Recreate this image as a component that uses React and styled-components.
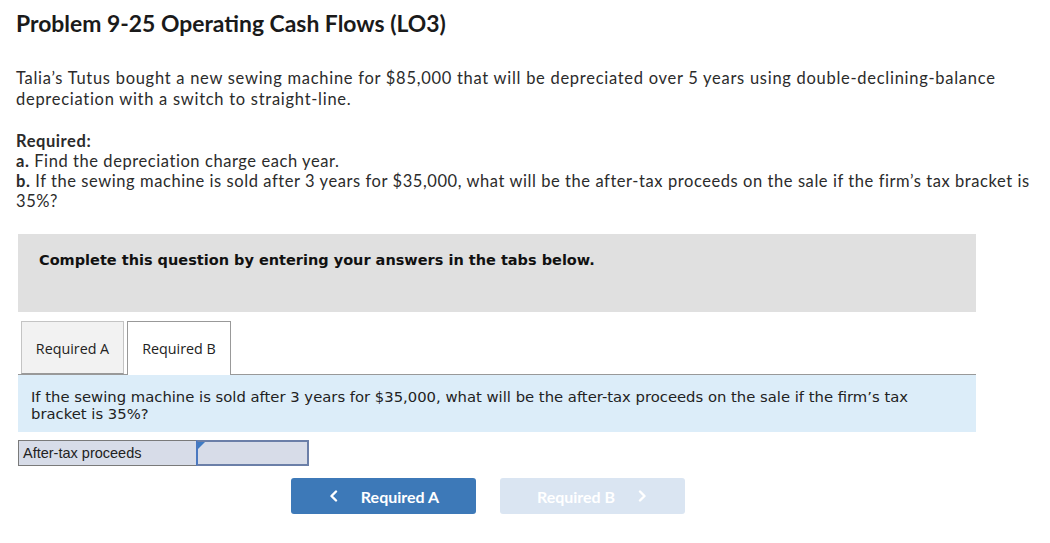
import React from "react";
import styled, { createGlobalStyle } from "styled-components";

const GlobalStyle = createGlobalStyle`
  body {
    margin: 0;
    background: #fff;
    font-family: "Lato", "Open Sans", sans-serif;
    color: #222;
  }
`;

const Page = styled.div`
  padding: 10px 16px 0 16px;
  width: 1018px;
`;

const Title = styled.h1`
  font-family: "Lato", sans-serif;
  font-size: 22.9px;
  font-weight: 700;
  margin: 0 0 32px 0;
  line-height: 26px;
  color: #1a1a1a;
`;

const Para = styled.p`
  font-size: 16.5px;
  letter-spacing: 0.72px;
  line-height: 21px;
  margin: 0 0 21px 0;
  color: #2b2b2b;
`;

const Required = styled.div`
  font-size: 16.5px;
  letter-spacing: 0.57px;
  line-height: 20px;
  color: #2b2b2b;
  b {
    font-weight: 700;
  }
`;

const Card = styled.div`
  margin: 23px 0 0 2px;
  width: 958px;
`;

const Notice = styled.div`
  background: #e0e0e0;
  height: 78px;
  padding: 18px 21px 0;
  box-sizing: border-box;
  font-family: "DejaVu Sans", Verdana, sans-serif;
  font-weight: 700;
  font-size: 14.5px;
  color: #111;
`;

const TabRow = styled.div`
  display: flex;
  align-items: flex-start;
  gap: 3px;
  margin-top: 9px;
  padding-left: 3px;
  border-bottom: 1px solid #999;
  height: 53px;
`;

const Tab = styled.div`
  width: ${(p) => (p.$active ? "104px" : "103px")};
  height: ${(p) => (p.$active ? "54px" : "53px")};
  box-sizing: border-box;
  display: flex;
  align-items: center;
  justify-content: center;
  padding-top: ${(p) => (p.$active ? "0" : "1px")};
  font-family: "Open Sans", sans-serif;
  font-size: 14.3px;
  color: #222;
  background: ${(p) => (p.$active ? "#fff" : "#f2f2f2")};
  border: 1px solid ${(p) => (p.$active ? "#999" : "#c4c4c4")};
  border-bottom: ${(p) => (p.$active ? "none" : "1px solid #999")};
  position: relative;
  z-index: 1;
`;

const Panel = styled.div`
  background: #dcedf9;
  height: 57px;
  box-sizing: border-box;
  padding: 13px 13px 0;
  font-family: "DejaVu Sans", Verdana, sans-serif;
  font-size: 14.8px;
  line-height: 17px;
  color: #222;
  span {
    display: block;
    max-width: 900px;
  }
`;

const AnswerRow = styled.div`
  display: flex;
  margin-top: 8px;
  height: 26px;
`;

const Label = styled.div`
  width: 178px;
  box-sizing: border-box;
  border: 1px solid #7a7a7a;
  border-right: none;
  background: #d7dce8;
  font-family: "Liberation Sans", Arial, sans-serif;
  font-size: 14.5px;
  padding: 0 4px;
  display: flex;
  align-items: center;
  color: #222;
`;

const Input = styled.div`
  width: 113px;
  box-sizing: border-box;
  border: 2px solid #6b7fa8;
  border-left: 2px solid #4a78c0;
  background: #d7dce8;
  position: relative;
  &::before {
    content: "";
    position: absolute;
    left: 0;
    top: 0;
    border-top: 7px solid #3f7bc4;
    border-right: 7px solid transparent;
  }
`;

const Nav = styled.div`
  display: flex;
  gap: 24px;
  margin: 12px 0 0 273px;
`;

const NavButton = styled.button`
  width: 185px;
  height: 36px;
  border: none;
  border-radius: 3px;
  background: ${(p) => (p.$disabled ? "#dae5f2" : "#3d79b8")};
  color: #fff;
  font-family: "Lato", sans-serif;
  font-weight: 700;
  font-size: 16px;
  display: flex;
  align-items: center;
  justify-content: center;
  gap: 21px;
  padding: 0;
  cursor: ${(p) => (p.$disabled ? "default" : "pointer")};
  svg {
    width: 12px;
    height: 12px;
  }
`;

const Chevron = ({ dir }) => (
  <svg viewBox="0 0 12 12" fill="none" stroke="#fff" strokeWidth="2.4" strokeLinecap="round" strokeLinejoin="round">
    {dir === "left" ? <path d="M8 1.5 L3.5 6 L8 10.5" /> : <path d="M4 1.5 L8.5 6 L4 10.5" />}
  </svg>
);

export default function App() {
  return (
    <>
      <GlobalStyle />
      <Page>
        <Title>Problem 9-25 Operating Cash Flows (LO3)</Title>
        <Para>
          Talia’s Tutus bought a new sewing machine for $85,000 that will be depreciated over 5 years using
          double-declining-balance depreciation with a switch to straight-line.
        </Para>
        <Required>
          <b>Required:</b>
          <div>
            <b>a.</b> Find the depreciation charge each year.
          </div>
          <div>
            <b>b.</b> If the sewing machine is sold after 3 years for $35,000, what will be the after-tax proceeds on
            the sale if the firm’s tax bracket is 35%?
          </div>
        </Required>
        <Card>
          <Notice>Complete this question by entering your answers in the tabs below.</Notice>
          <TabRow>
            <Tab>Required A</Tab>
            <Tab $active>Required B</Tab>
          </TabRow>
          <Panel>
            <span>
              If the sewing machine is sold after 3 years for $35,000, what will be the after-tax proceeds on the sale
              if the firm’s tax bracket is 35%?
            </span>
          </Panel>
          <AnswerRow>
            <Label>After-tax proceeds</Label>
            <Input />
          </AnswerRow>
          <Nav>
            <NavButton>
              <Chevron dir="left" />
              Required A
            </NavButton>
            <NavButton $disabled>
              Required B
              <Chevron dir="right" />
            </NavButton>
          </Nav>
        </Card>
      </Page>
    </>
  );
}
